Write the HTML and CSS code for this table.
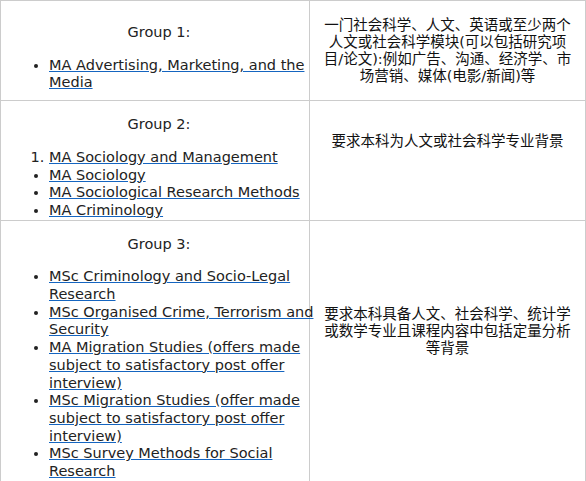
FILE: index.html
```html
<!DOCTYPE html>
<html lang="zh">
<head>
    <meta charset="UTF-8">
    <meta name="viewport" content="width=device-width, initial-scale=1.0">
    <title>Programme Groups</title>
    <link rel="stylesheet" href="styles.css">
</head>
<body>
    <table class="groups">
        <colgroup>
            <col class="col-prog">
            <col class="col-req">
        </colgroup>
        <tr class="first">
            <td class="prog">
                <p class="group-title">Group 1:</p>
                <ul>
                    <li><a href="#">MA Advertising, Marketing, and the Media</a></li>
                </ul>
            </td>
            <td class="req">一门社会科学、人文、英语或至少两个人文或社会科学模块(可以包括研究项目/论文):例如广告、沟通、经济学、市场营销、媒体(电影/新闻)等</td>
        </tr>
        <tr>
            <td class="prog">
                <p class="group-title">Group 2:</p>
                <ol>
                    <li><a href="#">MA Sociology and Management</a></li>
                </ol>
                <ul>
                    <li><a href="#">MA Sociology</a></li>
                    <li><a href="#">MA Sociological Research Methods</a></li>
                    <li><a href="#">MA Criminology</a></li>
                </ul>
            </td>
            <td class="req">要求本科为人文或社会科学专业背景</td>
        </tr>
        <tr>
            <td class="prog">
                <p class="group-title">Group 3:</p>
                <ul>
                    <li><a href="#">MSc Criminology and Socio-Legal Research</a></li>
                    <li><a href="#"><span class="keep">MSc Organised Crime, Terrorism and</span> Security</a></li>
                    <li><a href="#">MA Migration Studies (offers made subject to satisfactory post offer interview)</a></li>
                    <li><a href="#">MSc Migration Studies (offer made subject to satisfactory post offer interview)</a></li>
                    <li><a href="#">MSc Survey Methods for Social Research</a></li>
                </ul>
            </td>
            <td class="req">要求本科具备人文、社会科学、统计学或数学专业且课程内容中包括定量分析等背景</td>
        </tr>
    </table>
</body>
</html>
```

FILE: styles.css
```css
body {
    margin: 0;
    font-family: "DejaVu Sans", "Noto Sans CJK SC", sans-serif;
    font-size: 14.5px;
    color: #222; /* near-black text */
    background-color: #fff;
}
.groups {
    width: 586px;
    border-collapse: collapse;
    table-layout: fixed;
}
.groups td {
    border: 1px solid #ccc; /* light grey grid */
}
.col-prog {
    width: 309px;
}
.prog {
    vertical-align: top;
    text-align: center;
    padding: 15px 0 0 8px;
    line-height: 17.7px;
}
.first .prog {
    padding-top: 23px;
    padding-bottom: 8px;
}
.group-title {
    margin: 0 0 15px;
}
.prog ul,
.prog ol {
    margin: 0;
    padding-left: 40px;
    text-align: left;
}
.prog a {
    color: #222;
    text-decoration: underline;
    text-decoration-color: #1565c0; /* blue underline on dark text */
}
.keep {
    white-space: nowrap;
}
.req {
    vertical-align: middle;
    text-align: center;
    padding: 0 13px 38px;
    line-height: 17px;
    color: #111;
}
.first .req {
    padding-bottom: 0;
}
```
